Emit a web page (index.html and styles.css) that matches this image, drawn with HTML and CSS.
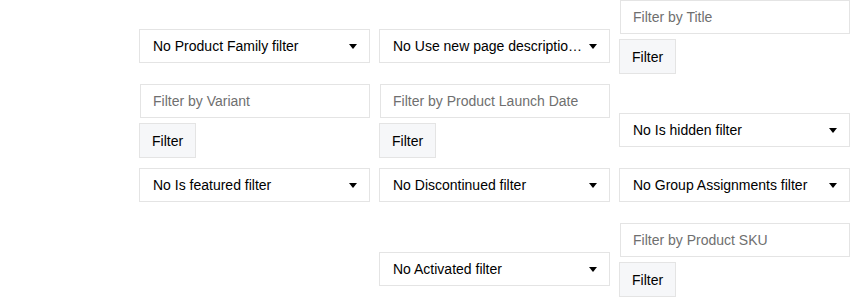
FILE: index.html
```html
<!DOCTYPE html>
<html lang="en">
<head>
  <meta charset="UTF-8">
  <meta name="viewport" content="width=device-width, initial-scale=1.0">
  <title>Product Filters</title>
  <link rel="stylesheet" href="styles.css">
</head>
<body>

  <div class="filters">
    <div class="dropdown">
      <span class="dropdown-label">No Product Family filter</span>
      <svg class="caret" width="8" height="5" viewBox="0 0 8 5"><path d="M0 0h8L4 5z"/></svg>
    </div>
    <div class="dropdown">
      <span class="dropdown-label">No Use new page description filter</span>
      <svg class="caret" width="8" height="5" viewBox="0 0 8 5"><path d="M0 0h8L4 5z"/></svg>
    </div>
    <div class="text-filter">
      <input class="filter-input" type="text" placeholder="Filter by Title">
      <button class="filter-button">Filter</button>
    </div>

    <div class="text-filter">
      <input class="filter-input" type="text" placeholder="Filter by Variant">
      <button class="filter-button">Filter</button>
    </div>
    <div class="text-filter">
      <input class="filter-input" type="text" placeholder="Filter by Product Launch Date">
      <button class="filter-button">Filter</button>
    </div>
    <div class="dropdown">
      <span class="dropdown-label">No Is hidden filter</span>
      <svg class="caret" width="8" height="5" viewBox="0 0 8 5"><path d="M0 0h8L4 5z"/></svg>
    </div>

    <div class="dropdown">
      <span class="dropdown-label">No Is featured filter</span>
      <svg class="caret" width="8" height="5" viewBox="0 0 8 5"><path d="M0 0h8L4 5z"/></svg>
    </div>
    <div class="dropdown">
      <span class="dropdown-label">No Discontinued filter</span>
      <svg class="caret" width="8" height="5" viewBox="0 0 8 5"><path d="M0 0h8L4 5z"/></svg>
    </div>
    <div class="dropdown">
      <span class="dropdown-label">No Group Assignments filter</span>
      <svg class="caret" width="8" height="5" viewBox="0 0 8 5"><path d="M0 0h8L4 5z"/></svg>
    </div>

    <div class="dropdown">
      <span class="dropdown-label">No Activated filter</span>
      <svg class="caret" width="8" height="5" viewBox="0 0 8 5"><path d="M0 0h8L4 5z"/></svg>
    </div>
    <div class="text-filter">
      <input class="filter-input" type="text" placeholder="Filter by Product SKU">
      <button class="filter-button">Filter</button>
    </div>
  </div>

</body>
</html>
```

FILE: styles.css
```css
body {
  margin: 0;
  background-color: #fff;
  color: #000;
  font-family: "Liberation Sans", Arial, sans-serif;
  font-size: 14px;
}

.filters {
  display: flex;
  flex-wrap: wrap;
  justify-content: flex-end;
  align-items: flex-end;
  column-gap: 9px;
  row-gap: 10px;
}

.dropdown {
  box-sizing: border-box;
  width: 231px;
  height: 34px;
  margin-bottom: 11px;
  padding: 0 12px 0 13px;
  display: flex;
  align-items: center;
  gap: 6px;
  border: 1px solid #e4e4e4;
  background-color: #fff;
}

.dropdown-label {
  flex: 1;
  min-width: 0;
  white-space: nowrap;
  overflow: hidden;
  text-overflow: ellipsis;
}

.caret {
  flex: none;
  fill: #000;
}

.text-filter {
  width: 231px;
  display: flex;
  flex-direction: column;
  align-items: flex-start;
  gap: 5px;
}

.filter-input {
  box-sizing: border-box;
  width: 230px;
  height: 34px;
  margin-left: 1px;
  padding: 0 12px;
  border: 1px solid #e4e4e4;
  font-family: inherit;
  font-size: 14px;
  color: #000;
  outline: none;
}

.filter-input::placeholder {
  color: #6f6f6f;
}

.filter-button {
  box-sizing: border-box;
  height: 35px;
  padding: 0 12px;
  border: 1px solid #e4e4e4;
  background-color: #f6f7f9;
  font-family: inherit;
  font-size: 14px;
  color: #000;
}
```
